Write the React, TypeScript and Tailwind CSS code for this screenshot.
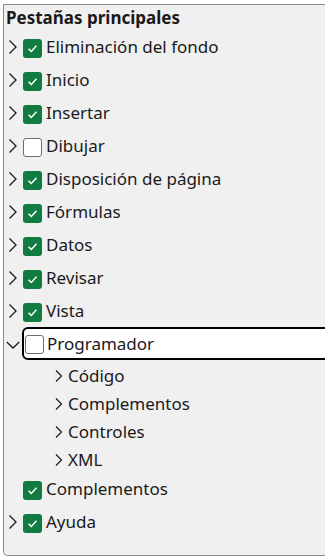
import React from "react";

const font = { fontFamily: '"Noto Sans", "Open Sans", sans-serif' };

function Chevron({ down = false }: { down?: boolean }) {
  return down ? (
    <svg width="14" height="14" viewBox="0 0 14 14" className="shrink-0">
      <path d="M0.8 4 L7 10 L13.2 4" fill="none" stroke="#1a1a1a" strokeWidth="1.3" />
    </svg>
  ) : (
    <svg width="12" height="16" viewBox="0 0 12 16" className="shrink-0">
      <path d="M2.5 1.5 L9 8 L2.5 14.5" fill="none" stroke="#1a1a1a" strokeWidth="1.3" />
    </svg>
  );
}

function SubChevron() {
  return (
    <svg width="10" height="14" viewBox="0 0 10 14" className="shrink-0">
      <path d="M2 1.5 L7.5 7 L2 12.5" fill="none" stroke="#1a1a1a" strokeWidth="1.2" />
    </svg>
  );
}

function Box({ checked }: { checked: boolean }) {
  return checked ? (
    <div className="w-[19px] h-[19px] rounded-[3px] bg-[#107c41] flex items-center justify-center shrink-0">
      <svg width="11" height="11" viewBox="0 0 11 11">
        <path d="M1.5 5.8 L4.3 8.5 L9.5 2.8" fill="none" stroke="#ffffff" strokeWidth="1.5" />
      </svg>
    </div>
  ) : (
    <div className="w-[19px] h-[19px] rounded-[3px] border border-[#6e6e6e] bg-white shrink-0" />
  );
}

type Row = { label: string; checked: boolean; chevron: boolean };

const rows: Row[] = [
  { label: "Eliminación del fondo", checked: true, chevron: true },
  { label: "Inicio", checked: true, chevron: true },
  { label: "Insertar", checked: true, chevron: true },
  { label: "Dibujar", checked: false, chevron: true },
  { label: "Disposición de página", checked: true, chevron: true },
  { label: "Fórmulas", checked: true, chevron: true },
  { label: "Datos", checked: true, chevron: true },
  { label: "Revisar", checked: true, chevron: true },
  { label: "Vista", checked: true, chevron: true },
];

const subs = ["Código", "Complementos", "Controles", "XML"];

function MainRow({ r }: { r: Row }) {
  return (
    <div className="h-[33px] flex items-center">
      <div className="w-[17px] flex justify-center pt-[1px]">{r.chevron ? <Chevron /> : null}</div>
      <div className="ml-[2px] mt-[3px]">
        <Box checked={r.checked} />
      </div>
      <span className="ml-[4px] text-[17px] leading-[20px] text-[#1a1a1a]">{r.label}</span>
    </div>
  );
}

export default function App() {
  return (
    <div className="w-[325px] h-[559px] bg-white pt-[4px] pl-[3px] overflow-hidden" style={font}>
      <div className="h-[552px] w-[340px] bg-[#f0f0f0] border-l border-t border-b border-[#8a8a8a] rounded-bl-[5px]">
        <div className="pl-[2px] pt-[3px] h-[25px] text-[17px] leading-[20px] font-bold text-[#1a1a1a]">
          Pestañas principales
        </div>
        {rows.map((r) => (
          <MainRow key={r.label} r={r} />
        ))}
        <div className="h-[33px] flex items-center">
          <div className="w-[17px] flex justify-center mt-[2px]">
            <Chevron down />
          </div>
          <div className="flex-1 h-[33px] ml-[1px] border-2 border-black rounded-[6px] bg-white flex items-center">
            <div className="ml-[1px] mt-[2px]">
              <Box checked={false} />
            </div>
            <span className="ml-[3px] text-[17px] leading-[20px] text-[#1a1a1a]">Programador</span>
          </div>
        </div>
        <div className="pt-[2px]">
          {subs.map((s) => (
            <div key={s} className="h-[28px] flex items-center pl-[50px]">
              <SubChevron />
              <span className="ml-[4px] text-[17px] leading-[20px] text-[#1a1a1a]">{s}</span>
            </div>
          ))}
        </div>
        <div className="-mt-[2px]">
          <MainRow r={{ label: "Complementos", checked: true, chevron: false }} />
        </div>
        <MainRow r={{ label: "Ayuda", checked: true, chevron: true }} />
      </div>
    </div>
  );
}
